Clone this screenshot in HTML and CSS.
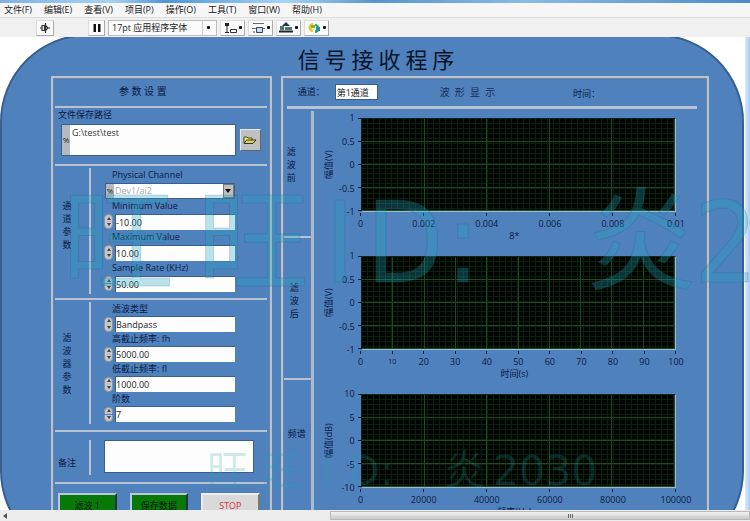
FILE: index.html
```html
<!DOCTYPE html>
<html lang="zh-CN">
<head>
<meta charset="utf-8">
<title>信号接收程序</title>
<link rel="stylesheet" href="styles.css">
</head>
<body>
<div class="glass"></div>
<nav class="menu">
  <a href="#">文件(F)</a><a href="#">编辑(E)</a><a href="#">查看(V)</a><a href="#">项目(P)</a><a href="#">操作(O)</a><a href="#">工具(T)</a><a href="#">窗口(W)</a><a href="#">帮助(H)</a>
</nav>
<div class="toolbar">
  <button class="tool run" aria-label="运行"><svg width="12" height="12" viewBox="0 0 12 12"><path d="M1 6h2M9 6h2M3 3.500h2.500v5H3zM6.500 1v10M6.500 3.500L9 6 6.500 8.500" fill="none" stroke="#333" stroke-width="1.200"/></svg></button>
  <button class="tool pause" aria-label="暂停"><svg width="10" height="10" viewBox="0 0 10 10"><path d="M1.500 1h2.500v8H1.500zM6 1h2.500v8H6z" fill="#111"/></svg></button>
  <span class="fontbox"><select aria-label="字体"><option>17pt 应用程序字体</option></select><i class="dot"></i></span>
  <button class="tool" aria-label="对齐"><svg width="13" height="12" viewBox="0 0 13 12"><path d="M1 1h4v3H1z" fill="#222"/><path d="M3 4v7M1 10.500h4" stroke="#222"/><path d="M6.500 7.500h6v3h-6z" fill="#fff" stroke="#333"/></svg><i class="dot"></i></button>
  <button class="tool" aria-label="分布"><svg width="13" height="12" viewBox="0 0 13 12"><path d="M1 1.500h11M0 6.500h13" stroke="#667"/><path d="M4.500 5.500h6v5h-6z" fill="#cde" stroke="#345"/><path d="M1 10h2" stroke="#345"/></svg><i class="dot"></i></button>
  <button class="tool" aria-label="调整大小"><svg width="14" height="12" viewBox="0 0 14 12"><path d="M7 0l4 4H3z" fill="#234"/><path d="M1 4h4v4H1zM6 5h7v3H6z" fill="#477"/><path d="M0 9.500h14" stroke="#222" stroke-width="2"/></svg><i class="dot"></i></button>
  <button class="tool" aria-label="重新排序"><svg width="13" height="12" viewBox="0 0 13 12"><path d="M5 1a4.500 4.500 0 0 0 0 9V8a3 3 0 0 1 0-5z" fill="#e3c929"/><path d="M7 2a4.500 4.500 0 0 1 0 9V8a2 2 0 0 0 0-4z" fill="#36a35e"/><path d="M3 3h4v3H3z" fill="#7ab92e"/><path d="M8 5h4v4H8z" fill="#288ca8"/></svg><i class="dot"></i></button>
</div>

<div class="workspace">
<main class="panel">
  <h1>信 号 接 收 程 序</h1>
  <div class="frames">
    <form class="frame settings">
      <h2>参 数 设 置</h2>
      <section class="path">
        <label for="path">文件保存路径</label>
        <div class="pathrow">
          <span class="pathfield"><span class="io">%</span><textarea id="path">G:\test\test</textarea></span>
          <button type="button" class="browse" aria-label="浏览"><svg width="14" height="10" viewBox="0 0 14 10"><path d="M1 8V2h3l1 1h4v2" fill="#f1ee4a" stroke="#444"/><path d="M1 8.500L3.500 5H13l-3 3.500z" fill="#d8d75c" stroke="#333"/></svg></button>
        </div>
      </section>
      <section class="group channel">
        <div class="side"><span>通道参数</span></div>
        <div class="fields">
          <label for="chan">Physical Channel</label>
          <div class="combo"><span class="io">%</span><select id="chan"><option>Dev1/ai2</option></select><i class="drop"></i></div>
          <label for="min">Minimum Value</label>
          <div class="num"><span class="spin"><b></b><b></b></span><input id="min" value="-10.00"></div>
          <label for="max">Maximum Value</label>
          <div class="num"><span class="spin"><b></b><b></b></span><input id="max" value="10.00"></div>
          <label for="rate">Sample Rate (KHz)</label>
          <div class="num"><span class="spin split"><b></b><b></b></span><input id="rate" value="50.00"></div>
        </div>
      </section>
      <section class="group filter">
        <div class="side"><span>滤波器参数</span></div>
        <div class="fields">
          <label for="type">滤波类型</label>
          <div class="num"><span class="spin"><b></b><b></b></span><input id="type" value="Bandpass"></div>
          <label for="fh">高截止频率: fh</label>
          <div class="num"><span class="spin"><b></b><b></b></span><input id="fh" value="5000.00"></div>
          <label for="fl">低截止频率: fl</label>
          <div class="num"><span class="spin"><b></b><b></b></span><input id="fl" value="1000.00"></div>
          <label for="order">阶数</label>
          <div class="num"><span class="spin split"><b></b><b></b></span><input id="order" value="7"></div>
        </div>
      </section>
      <section class="notes">
        <label for="notes">备注</label>
        <textarea id="notes"></textarea>
      </section>
      <div class="actions">
        <button type="button">滤波 1</button>
        <button type="button">保存数据</button>
        <button type="button" class="stop">STOP</button>
      </div>
    </form>

    <section class="frame waves">
      <header>
        <label for="ch">通道：</label><input id="ch" value="第1通道">
        <h2>波&nbsp; 形&nbsp; 显&nbsp; 示</h2>
        <span class="time">时间：</span>
      </header>
      <div class="charts">
        <div class="tabs">
          <div class="tab first"><span>滤波前</span></div>
          <div class="tab second"><span>滤波后</span></div>
          <div class="tab third"><span>频谱</span></div>
        </div>
        <div class="plots">
          <figure>
            <span class="yname">幅值(V)</span>
            <div class="yaxis"><span>1</span><span>0.5</span><span>0</span><span>-0.5</span><span>-1</span></div>
            <div class="plot five"></div>
            <div class="xaxis"><span>0</span><span>0.002</span><span>0.004</span><span>0.006</span><span>0.008</span><span>0.01</span></div>
            <figcaption>8*</figcaption>
          </figure>
          <figure>
            <span class="yname">幅值(V)</span>
            <div class="yaxis"><span>1</span><span>0.5</span><span>0</span><span>-0.5</span><span>-1</span></div>
            <div class="plot ten"></div>
            <div class="xaxis"><span>0</span><span class="faint">10</span><span>20</span><span>30</span><span>40</span><span>50</span><span>60</span><span>70</span><span>80</span><span>90</span><span>100</span></div>
            <figcaption>时间(s)</figcaption>
          </figure>
          <figure>
            <span class="yname">幅值(dB)</span>
            <div class="yaxis"><span>10</span><span>5</span><span>0</span><span>-5</span><span>-10</span></div>
            <div class="plot five"></div>
            <div class="xaxis"><span>0</span><span>20000</span><span>40000</span><span>60000</span><span>80000</span><span>100000</span></div>
            <figcaption>频率(Hz)</figcaption>
          </figure>
        </div>
      </div>
    </section>
  </div>
</main>
</div>
<div class="scroll"><i class="left"></i><div class="thumb"><i></i><i></i><i></i></div></div>
<div class="mark big" aria-hidden="true"><span>旺</span><span>旺</span><span>I</span><span>D</span><span>:</span><span>炎</span><span>2030</span></div>
<div class="mark small" aria-hidden="true"><span>旺</span><span>旺</span><span>I</span><span>D</span><span>:</span><span>炎</span><span>2030</span></div>
</body>
</html>
```
FILE: styles.css
```css
* { box-sizing: border-box; }
body {
  margin: 0;
  height: 100vh;
  display: flex;
  flex-direction: column;
  position: relative;
  overflow: hidden;
  background: #f0f0f0;
  color: #0b1a45;
  font: 9px/12px "Open Sans", "Noto Sans CJK SC", sans-serif;
}
button, input, select, textarea { font: inherit; color: inherit; margin: 0; padding: 0; border: 0; border-radius: 0; }
h1, h2, figure { margin: 0; font-weight: 400; }

.glass { height: 3px; flex: none; background: linear-gradient(90deg, #7fb2e2, #a6d2f3 15%, #4f94d4 22%, #a5d5f5 38%, #5596cf 50%, #8abbe5 70%, #4c8bc9); }
.menu { height: 14px; flex: none; display: flex; gap: 12px; padding-left: 4px; background: #f6f6f7; }
.menu a { color: #222; text-decoration: none; line-height: 13px; white-space: nowrap; }
.toolbar { height: 20px; flex: none; display: flex; align-items: center; gap: 3px; padding: 0 36px; background: #f0f0f0; border-top: 1px solid #ddd; }
.tool { height: 16px; min-width: 25px; padding: 0 2px; display: flex; align-items: center; justify-content: center; gap: 2px; background: #fafafa; border: 1px solid #aaa; border-top-color: #ddd; border-left-color: #ddd; }
.tool svg { flex: none; }
.run, .pause { min-width: 17px; }
.run { margin-right: 31px; }
.dot { width: 3px; height: 3px; flex: none; background: #111; border-radius: 1px; }
.fontbox { width: 109px; height: 16px; display: flex; align-items: center; background: #fafafa; border: 1px solid #bbb; padding-right: 6px; }
.fontbox select { flex: 1; min-width: 0; height: 14px; padding-left: 3px; appearance: none; background: none; color: #222; border-right: 1px solid #ccc; margin-right: 4px; }

.workspace { flex: 1; min-height: 0; overflow: hidden; display: flex; flex-direction: column; background: linear-gradient(90deg, #d7ebff, #a9cdf2) right / 5px 100% no-repeat #fff; }
.panel { flex: 1 0 auto; display: flex; flex-direction: column; margin: -3px 6px -49px 0; padding-top: 7px; background: #4f81bd; border: 2px solid #375f91; border-radius: 88px; }
h1 { color: #08142c; font-family: "Noto Sans CJK SC", sans-serif; font-size: 22px; line-height: 30px; text-align: center; padding-left: 8px; }
.frames { flex: 1; display: grid; grid-template-columns: 221fr 429fr; gap: 9px; margin: 3px 33px 0 49px; }
.frame { min-width: 0; border: 2px solid #b7c3d3; outline: 1px solid #6f8299; outline-offset: -3px; }

.settings > * { border-bottom: 2px solid #b7c3d3; margin: 0 3px 0 2px; }
h2 { font-size: 10px; line-height: 28px; }
.settings h2 { height: 30px; line-height: 26px; text-align: center; padding-right: 36px; }
.path { height: 58px; padding: 0 6px 0 3px; }
.path label { display: block; line-height: 13px; }
.pathrow { display: flex; gap: 4px; align-items: center; margin-top: 3px; padding-left: 3px; }
.pathfield { flex: 1; display: flex; height: 32px; border: 1px solid #37608f; }
.io { width: 8px; flex: none; display: flex; align-items: center; justify-content: center; background: #b5bac0; color: #222; font-size: 8px; }
textarea { resize: none; background: #fdfdfd; color: #333; display: block; }
.pathfield textarea { flex: 1; min-width: 0; padding: 2px; overflow: hidden; }
.browse { width: 21px; height: 22px; display: flex; align-items: center; justify-content: center; background: #c0c0c0; border: 1px solid #e6e6e6; border-right-color: #666; border-bottom-color: #666; }

.group { display: flex; }
.channel { height: 134px; padding: 2px 32px 4px 0; }
.filter { height: 132px; padding: 2px 32px 6px 0; }
.side { width: 36px; flex: none; display: flex; align-items: center; justify-content: center; padding-right: 9px; border-right: 2px solid #b7c3d3; }
.side span, .first span, .second span { width: 10px; font-size: 9px; line-height: 13px; overflow-wrap: anywhere; }
.channel .side { padding-bottom: 12px; }
.fields { flex: 1; min-width: 0; padding-left: 13px; }
.fields label { display: block; line-height: 14px; padding-left: 8px; white-space: nowrap; }
.combo, .num { display: flex; height: 17px; }
.filter .num { height: 16px; }
.combo { height: 16px; margin: 1px 0 0 1px; border: 1px solid #37608f; position: relative; background: #fff; }
.combo select { flex: 1; min-width: 0; appearance: none; background: none; color: #aaa; padding-left: 1px; }
.drop { width: 11px; background: #c0c0c0; border: 1px solid #777; display: flex; align-items: center; justify-content: center; pointer-events: none; }
.drop::before { content: ""; border: 3px solid transparent; border-top: 4px solid #111; border-bottom: 0; }
.num { gap: 2px; align-items: center; }
.num input { flex: 1; min-width: 0; height: 16px; background: #fdfdfd; color: #222; border-top: 1px solid #37608f; border-left: 1px solid #37608f; }
.spin { width: 9px; height: 15px; display: flex; flex-direction: column; }
.spin b { flex: 1; background: #c3c6ca; border: 1px solid #8d949c; display: flex; align-items: center; justify-content: center; }
.spin b::before { content: ""; border: 2px solid transparent; border-bottom: 3px solid #444; border-top: 0; }
.spin b:last-child::before { transform: rotate(180deg); }
.spin b:first-child { border-radius: 5px 5px 0 0; border-bottom: 0; }
.spin b:last-child { border-radius: 0 0 5px 5px; border-top: 0; }
.split { gap: 1px; }

.notes { height: 52px; display: flex; padding: 8px 13px 7px 0; }
.notes label { width: 36px; flex: none; padding: 17px 0 0 3px; border-right: 2px solid #b7c3d3; }
.notes textarea { flex: 1; min-width: 0; height: 33px; margin-left: 13px; border: 1px solid #37608f; }
.settings .actions { border: 0; display: flex; gap: 13px; padding: 9px 7px 0 3px; }
.actions button { flex: 1; height: 26px; background: #087808; color: #021c05; border: 2px solid #b9c9d6; border-right-color: #234; padding: 0; }
.actions .stop { background: #d9d9d9; color: #e0323c; border-color: #eee #777 #777 #eee; }

.waves { display: flex; flex-direction: column; }
.waves header { height: 31px; display: flex; align-items: center; margin: 0 10px 0 4px; padding-left: 11px; border-bottom: 3px solid #b7c3d3; }
.waves header input { width: 43px; height: 16px; margin-left: 10px; background: #fdfdfd; color: #222; border: 1px solid #37608f; padding-left: 1px; }
.waves header h2 { margin-left: 62px; white-space: nowrap; color: #1b2b55; }
.time { margin: 3px 97px 0 auto; }
.charts { flex: 1; display: flex; padding-top: 2px; }
.tabs { width: 31px; flex: none; border-right: 3px solid #aeb9c9; display: flex; flex-direction: column; }
.tab { display: flex; align-items: center; justify-content: center; border-bottom: 2px solid #b7c3d3; }
.first { height: 127px; padding: 0 10px 18px 0; }
.second { height: 142px; padding: 0 4px 16px 0; }
.third { height: 142px; padding-bottom: 34px; border: 0; }
.plots { flex: 1; min-width: 0; padding: 7px 31px 0 8px; }
figure { display: grid; grid-template-columns: 13px 26px 1fr; grid-template-rows: 94px 19px 25px; }
.yname { writing-mode: vertical-rl; text-orientation: sideways; transform: rotate(180deg); text-align: center; line-height: 13px; }
.yaxis { display: flex; flex-direction: column; justify-content: space-between; margin: -6px 0; text-align: right; padding-right: 6px; position: relative; }
.yaxis::after { content: ""; position: absolute; right: 0; top: 6px; bottom: 5px; width: 3px; background: repeating-linear-gradient(#0b1a45 0 1px, transparent 1px 23px); }
.plot {
  border: 1px solid #122412;
  border-right-color: #9fb7d6;
  border-bottom-color: #9fb7d6;
  background:
    repeating-linear-gradient(90deg, transparent 0 calc(var(--step) - 1px), #1c4a22 calc(var(--step) - 1px) var(--step)),
    repeating-linear-gradient(transparent 0 22px, #1c4a22 22px 23px),
    repeating-linear-gradient(90deg, transparent 0 5px, #0b200d 5px 6px),
    repeating-linear-gradient(transparent 0 4px, #0b200d 4px 5px),
    #010501;
  background-clip: padding-box;
}
.five { --step: 20%; }
.ten { --step: 10%; }
.xaxis { grid-column: 3; display: flex; justify-content: space-between; padding-top: 6px; }
.xaxis span { width: 0; display: flex; justify-content: center; position: relative; }
.xaxis span::before { content: ""; position: absolute; top: -5px; width: 1px; height: 3px; background: #0b1a45; }
.xaxis .faint { font-size: 7px; }
figcaption { grid-column: 3; text-align: center; line-height: 10px; padding-right: 8px; }

.scroll { height: 11px; flex: none; display: flex; align-items: center; background: #ededee; }
.left { margin-left: 3px; border: 3px solid transparent; border-right: 4px solid #555; border-left: 0; }
.thumb { width: 56%; height: 9px; margin-left: auto; display: flex; align-items: center; justify-content: center; gap: 1px; padding-left: 60px; background: linear-gradient(#f3f3f3, #c9c9cb); border: 1px solid #b9b9bb; }
.thumb i { width: 1px; height: 4px; background: #666; }

.mark { position: absolute; left: 0; right: 0; overflow: hidden; display: grid; pointer-events: none; white-space: nowrap; font-family: "DejaVu Sans Condensed", "DejaVu Sans", "Noto Sans CJK SC", sans-serif; color: rgba(35, 165, 190, 0.3); }
.big { top: 183px; padding-left: 62px; grid-template-columns: 135px 128px 41px 80px 139px 109px 1fr; font-size: 112px; line-height: 120px; -webkit-text-stroke: 1px rgba(20, 90, 140, 0.2); }
.small { top: 449px; padding-left: 207px; grid-template-columns: 54px 61px 26px 32px 64px 49px 1fr; font-family: "DejaVu Sans", "Noto Sans CJK SC", sans-serif; font-size: 41px; line-height: 44px; color: rgba(35, 165, 175, 0.22); }
```
